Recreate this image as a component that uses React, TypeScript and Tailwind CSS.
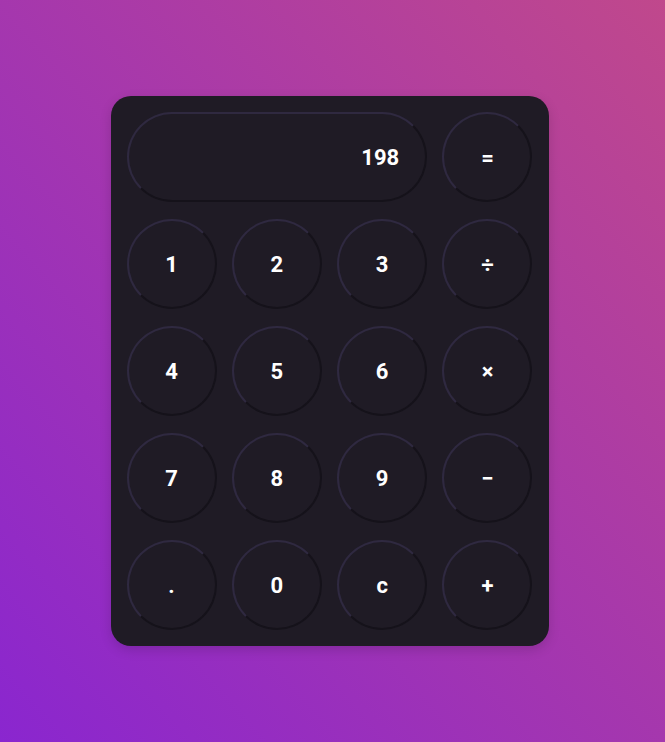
import { useState } from 'react';

const keys = ['1', '2', '3', '÷', '4', '5', '6', '×', '7', '8', '9', '−', '.', '0', 'c', '+'];

const ring =
    'border-2 border-t-[#2f2940] border-l-[#2f2940] border-r-[#15121a] border-b-[#15121a]';

const App = () => {
    const [value, setValue] = useState('198');

    const press = (k: string) => {
        if (k === 'c') {
            setValue('');
            return;
        }
        setValue(prev => prev + k);
    };

    return (
        <div
            className="w-full min-h-screen flex items-center justify-center pr-[6px] bg-[linear-gradient(to_top_right,#8a26cf,#c0488c)]"
            style={{ fontFamily: 'Roboto, "Liberation Sans", sans-serif' }}
        >
            <div className="w-[438px] h-[550px] p-4 bg-[#1f1b25] rounded-[20px] shadow-[0_4px_12px_rgba(0,0,0,0.15)]">
                <div className="grid grid-cols-4 gap-x-[15.3px] gap-y-[17px]">
                    <div
                        className={`col-span-3 h-[90px] rounded-[45px] ${ring} flex items-center justify-end pr-[26px] text-white text-[22px] font-bold`}
                    >
                        {value}
                    </div>
                    <button
                        className={`w-[90px] h-[90px] rounded-full ${ring} flex items-center justify-center text-white text-[22px] font-bold`}
                    >
                        =
                    </button>
                    {keys.map(k => (
                        <button
                            key={k}
                            onClick={() => press(k)}
                            className={`w-[90px] h-[90px] rounded-full ${ring} flex items-center justify-center text-white text-[22px] font-bold`}
                        >
                            {k}
                        </button>
                    ))}
                </div>
            </div>
        </div>
    );
};

export default App;
